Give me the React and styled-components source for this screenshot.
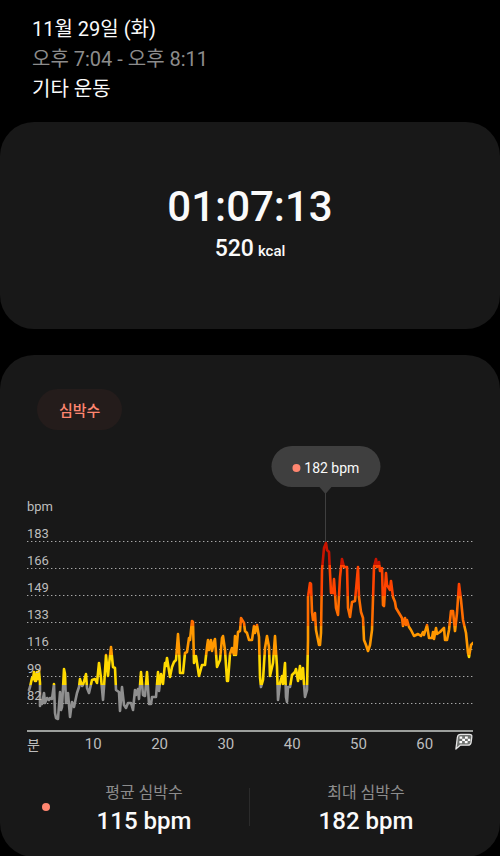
import styled, { createGlobalStyle } from 'styled-components'

const GlobalStyle = createGlobalStyle`
  *, *::before, *::after {
    box-sizing: border-box;
  }
  body {
    margin: 0;
    background-color: #000;
    color: #fafafa;
    font-family: Roboto, 'Noto Sans CJK KR', sans-serif;
  }
  h1, h2, p, dl, dt, dd {
    margin: 0;
    font-weight: 400;
  }
`
const Page = styled.main`
  display: flex;
  flex-direction: column;
  gap: 26px;
`
const Top = styled.header`
  padding: 14px 32px 0;
  margin-bottom: -8px;
  font-size: 20px;
  line-height: 30px;
`
const Title = styled.h1`
  font-size: 20px;
  line-height: 30px;
`
const Line = styled.p`
  color: ${(props) => (props.$muted ? '#8c8c8c' : '#fafafa')};
`
const Card = styled.section`
  border-radius: 34px;
  background-color: #181818;
`
const Summary = styled(Card)`
  padding: 60px 24px 61px;
  text-align: center;
`
const Duration = styled.p`
  font-size: 42px;
  font-weight: 500;
  line-height: 50px;
`
const Calories = styled.p`
  display: flex;
  align-items: baseline;
  justify-content: center;
  gap: 4px;
  font-size: 23px;
  font-weight: 500;
  line-height: 34px;
`
const Unit = styled.span`
  font-size: 15px;
`
const HeartCard = styled(Card)`
  padding: 34px 27px 20px;
`
const Chip = styled.button`
  display: block;
  height: 41px;
  margin: 0 10px 16px;
  padding: 0 22px;
  border: 0;
  border-radius: 21px;
  background-color: #241c1b;
  color: #ff8670;
  font-family: inherit;
  font-size: 15px;
  font-weight: 500;
`
const Chart = styled.div`
  position: relative;
  padding-top: 41px;
`
const Tooltip = styled.div`
  position: absolute;
  top: 0;
  left: 67%;
  transform: translateX(-50%);
  height: 41px;
  padding: 2px 21px 0;
  display: flex;
  align-items: center;
  gap: 4px;
  border-radius: 21px;
  background-color: #3f3f3f;
  font-size: 14px;
  white-space: nowrap;

  &::after {
    content: '';
    position: absolute;
    top: 100%;
    left: 50%;
    transform: translateX(-50%);
    border: 6px solid transparent;
    border-top: 7px solid #3f3f3f;
    border-bottom: 0;
  }
`
const Dot = styled.span`
  width: 8px;
  height: 8px;
  border-radius: 50%;
  background-color: #ff8670;
`
const Plot = styled.div`
  display: grid;

  & > * {
    grid-area: 1 / 1;
  }
`
const Graph = styled.svg`
  width: 100%;
  height: 245px;
  display: block;
`
const Levels = styled.div`
  color: #bdbdbd;
  font-size: 13px;
  z-index: 1;
`
const Level = styled.div`
  height: 27px;
  padding-top: 12px;
  line-height: 15px;
`
const Minutes = styled.div`
  display: grid;
  grid-template-columns: minmax(0, 33fr) repeat(6, minmax(0, 66fr)) minmax(0, 15fr);
  height: 24px;
  align-items: center;
  text-align: center;
  color: #bdbdbd;
  font-size: 15px;
`
const MinuteUnit = styled.span`
  font-size: 14px;
  text-align: left;
`
const Flag = styled.svg`
  width: 18px;
  height: 18px;
  align-self: start;
  justify-self: end;
`
const Stats = styled.div`
  display: grid;
  grid-template-columns: 37px minmax(0, 185fr) 1px minmax(0, 223fr);
  align-items: center;
  margin-top: 25px;
`
const StatDot = styled(Dot)`
  justify-self: center;
  margin-bottom: 4px;
`
const Divider = styled.span`
  height: 38px;
  margin-bottom: 4px;
  background-color: #2b2b2b;
`
const Stat = styled.dl`
  padding: ${(props) => (props.$last ? '0 0 0 9px' : '0 25px 0 0')};
  text-align: center;
`
const StatName = styled.dt`
  color: #8c8c8c;
  font-size: 16px;
  line-height: 24px;
`
const StatValue = styled.dd`
  font-size: 24px;
  font-weight: 500;
  line-height: 32px;
`

const levels = ['bpm', 183, 166, 149, 133, 116, 99, 82]
const minutes = [10, 20, 30, 40, 50, 60]

// colour of the curve by heart rate zone, from the top down
const zones = [
  { from: 487, to: 565, color: '#c81400' },
  { from: 565, to: 596, color: '#ff4300' },
  { from: 596, to: 626, color: '#ff6d00' },
  { from: 626, to: 655, color: '#ff9800' },
  { from: 655, to: 685, color: '#ffd900' },
  { from: 685, to: 732, color: '#8f8f8f' },
]

const curve = `
29,690 30,687 32,678 33,679 34,672 35,681 36,681 37,672 38,679 39,671 40,683 40,706 41,700 42,704
44,693 45,703 47,698 49,700 50,698 52,699 54,684 55,713 56,718 58,719 60,692 61,710 62,707 64,669
65,674 66,703 68,693 70,717 72,702 74,707 77,693 79,687 80,679 82,686 83,685 86,674 87,688 89,693
92,680 95,679 97,683 99,663 101,678 103,700 104,687 106,655 108,676 109,665 111,647 113,667 115,668
116,690 119,692 120,711 122,687 124,705 126,708 128,703 131,703 133,710 135,690 136,695 138,689
139,699 141,672 143,695 145,696 147,672 149,704 151,704 152,697 156,697 158,672 159,691 161,674
163,684 165,663 166,666 167,658 170,677 172,667 174,662 176,660 178,634 179,648 180,673 183,673
185,653 187,652 189,638 190,640 192,621 193,622 194,663 196,656 199,676 202,665 205,665 207,647
208,640 209,650 211,640 212,651 214,642 215,639 217,667 220,660 222,638 223,636 225,650 227,681
228,681 230,654 232,648 234,655 235,636 236,655 238,632 240,631 241,618 244,623 245,631 247,633
249,640 252,640 254,626 255,633 257,625 259,637 260,677 261,687 263,680 265,648 267,636 269,647
270,676 273,663 275,636 277,667 278,700 280,683 282,676 283,684 285,663 286,697 287,702 288,687
290,687 292,675 295,672 296,669 298,681 300,666 301,679 303,668 304,684 305,697 307,690 308,640
308,597 310,583 311,584 312,612 313,620 315,613 316,630 319,645 320,645 321,633 322,570 324,548
326,543 327,550 329,552 331,593 333,593 334,579 336,608 338,615 340,577 342,559 344,567 347,567
348,608 350,617 352,602 355,601 358,567 359,597 361,612 363,618 364,640 366,645 368,651 370,645
372,630 374,567 376,559 377,567 379,562 380,571 382,568 383,605 384,606 386,573 387,585 390,590
391,581 393,597 395,602 396,608 399,613 402,618 403,626 405,618 406,625 407,620 409,627 411,630
414,636 418,634 421,636 423,632 424,635 427,625 429,638 432,638 433,632 434,639 436,628 437,634
440,632 444,628 445,640 447,640 449,630 451,611 453,611 455,631 457,613 459,584 461,600 463,620
466,633 468,653 469,657 471,645 473,643`

function HeartRateChart() {
  return (
    <Chart>
      <Plot>
        <Graph viewBox="27 487 446 245" preserveAspectRatio="none" aria-hidden="true">
          <defs>
            <linearGradient id="zones" gradientUnits="userSpaceOnUse" x1="0" y1="487" x2="0" y2="732">
              {zones.flatMap(({ from, to, color }) => [
                <stop key={`${from}a`} offset={(from - 487) / 245} stopColor={color} />,
                <stop key={`${from}b`} offset={(to - 487) / 245} stopColor={color} />,
              ])}
            </linearGradient>
          </defs>
          {levels.slice(1).map((level, i) => (
            <line
              key={level}
              x1="27"
              x2="473"
              y1={541.5 + i * 27}
              y2={541.5 + i * 27}
              stroke="#a8a8a8"
              strokeDasharray="1.4 2.6"
              vectorEffect="non-scaling-stroke"
            />
          ))}
          <line x1="325.5" x2="325.5" y1="487" y2="543" stroke="#3f3f3f" />
          <polyline
            points={curve}
            fill="none"
            stroke="url(#zones)"
            strokeWidth="2.6"
            strokeLinejoin="round"
            strokeLinecap="round"
            vectorEffect="non-scaling-stroke"
          />
          <rect x="27" y="730" width="446" height="2" fill="#9c9f9c" />
        </Graph>
        <Levels>
          {levels.map((level) => (
            <Level key={level}>{level}</Level>
          ))}
        </Levels>
      </Plot>
      <Minutes>
        <MinuteUnit>분</MinuteUnit>
        {minutes.map((minute) => (
          <span key={minute}>{minute}</span>
        ))}
        <Flag viewBox="0 0 18 18" aria-hidden="true">
          <path
            d="M0.9 17 L2.4 5 Q2.9 2.4 5.6 2.4 H14.4 Q17.2 2.4 16.8 5 L16.1 10.4 Q15.6 13.2 12.9 13.2 H5.2 Z"
            fill="#707370"
            stroke="#e4e4e4"
            strokeWidth="1.3"
            strokeLinejoin="round"
          />
          <path
            d="M4.6 4.6h2.6v2.2H4.6zM10 4.6h2.8v2.2H10zM7.2 6.8H10V9H7.2zM12.8 6.8h2.4V9h-2.4zM4.4 9h2.7v2.2H4.4zM9.8 9h2.8v2.2H9.8z"
            fill="#fff"
          />
        </Flag>
      </Minutes>
      <Tooltip>
        <Dot />
        182 bpm
      </Tooltip>
    </Chart>
  )
}

function App() {
  return (
    <>
      <GlobalStyle />
      <Page>
        <Top>
          <Title>11월 29일 (화)</Title>
          <Line $muted>오후 7:04 - 오후 8:11</Line>
          <Line>기타 운동</Line>
        </Top>
        <Summary>
          <Duration>01:07:13</Duration>
          <Calories>
            520 <Unit>kcal</Unit>
          </Calories>
        </Summary>
        <HeartCard>
          <Chip type="button">심박수</Chip>
          <HeartRateChart />
          <Stats>
            <StatDot />
            <Stat>
              <StatName>평균 심박수</StatName>
              <StatValue>115 bpm</StatValue>
            </Stat>
            <Divider />
            <Stat $last>
              <StatName>최대 심박수</StatName>
              <StatValue>182 bpm</StatValue>
            </Stat>
          </Stats>
        </HeartCard>
      </Page>
    </>
  )
}

export default App
